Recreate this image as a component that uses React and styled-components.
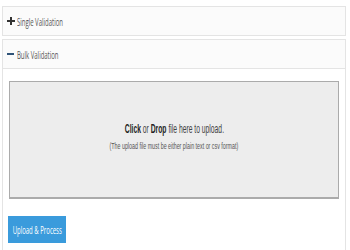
import React from 'react';
import styled, { createGlobalStyle } from 'styled-components';

const GlobalStyle = createGlobalStyle`
    body {
        margin: 0;
        background: #ffffff;
        font-family: "Open Sans", "Liberation Sans", sans-serif;
    }
`;

const Wrapper = styled.div`
    padding: 6px 4px 0 2px;
    display: flex;
    flex-direction: column;
    gap: 3px;
`;

const Panel = styled.div`
    border: 1px solid #e4e4e4;
    border-bottom: ${(p) => (p.$open ? 'none' : '1px solid #e4e4e4')};
    background: #ffffff;
`;

const PanelHeader = styled.div`
    height: 28px;
    display: flex;
    align-items: center;
    gap: 2px;
    padding-left: 4px;
    background: #fbfbfb;
    border-bottom: ${(p) => (p.$open ? '1px solid #e4e4e4' : 'none')};
`;

const Squeeze = styled.span`
    display: inline-block;
    white-space: nowrap;
    transform: scaleX(${(p) => p.$x || 0.52});
    transform-origin: ${(p) => p.$origin || 'center'} center;
`;

const HeaderText = styled(Squeeze)`
    font-size: 11.5px;
    color: #555555;
`;

const PanelBody = styled.div`
    padding: 12px 6px 8px 6px;
`;

const DropZone = styled.div`
    box-sizing: border-box;
    height: 118px;
    padding-bottom: 7px;
    background: #ededed;
    border: 1px solid #ababab;
    border-bottom-width: 2px;
    display: flex;
    flex-direction: column;
    align-items: center;
    justify-content: center;
    gap: 4px;
    font-family: "Liberation Sans", Arial, sans-serif;
`;

const MainLine = styled(Squeeze)`
    font-size: 13px;
    color: #444444;
    b {
        color: #222222;
    }
`;

const SubLine = styled(Squeeze)`
    font-size: 9.5px;
    color: #555555;
`;

const Button = styled.button`
    margin-top: 17px;
    margin-left: -1px;
    width: 58px;
    height: 27px;
    border: none;
    background: #3a9bdc;
    color: #ffffff;
    font-family: "Open Sans", "Liberation Sans", sans-serif;
    font-size: 11.5px;
    padding: 0;
    display: flex;
    align-items: center;
    justify-content: center;
    overflow: visible;
`;

function PlusIcon() {
    return (
        <svg width="8" height="8" viewBox="0 0 8 8">
            <rect x="3" y="0" width="2" height="8" fill="#333333" />
            <rect x="0" y="3" width="8" height="2" fill="#333333" />
        </svg>
    );
}

function MinusIcon() {
    return (
        <svg width="8" height="8" viewBox="0 0 8 8">
            <rect x="0" y="3" width="7" height="2" fill="#2f5378" />
        </svg>
    );
}

export default function App() {
    return (
        <>
            <GlobalStyle />
            <Wrapper>
                <Panel>
                    <PanelHeader>
                        <PlusIcon />
                        <HeaderText $origin='left'>Single Validation</HeaderText>
                    </PanelHeader>
                </Panel>
                <Panel $open>
                    <PanelHeader $open>
                        <MinusIcon />
                        <HeaderText $origin='left'>Bulk Validation</HeaderText>
                    </PanelHeader>
                    <PanelBody>
                        <DropZone>
                            <MainLine $x={0.52}>
                                <b>Click</b> or <b>Drop</b> file here to upload.
                            </MainLine>
                            <SubLine $x={0.56}>
                                (The upload file must be either plain text or csv format)
                            </SubLine>
                        </DropZone>
                        <Button>
                            <Squeeze $x={0.52}>Upload &amp; Process</Squeeze>
                        </Button>
                    </PanelBody>
                </Panel>
            </Wrapper>
        </>
    );
}
